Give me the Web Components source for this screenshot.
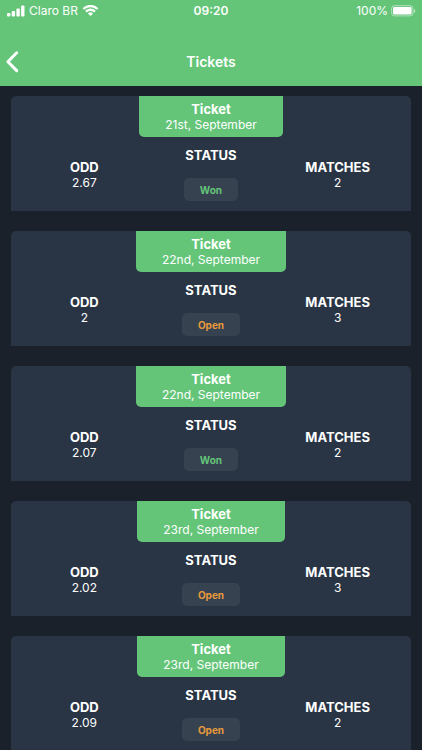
<!DOCTYPE html>
<html lang="en">
<head>
<meta charset="utf-8">
<meta name="viewport" content="width=device-width, initial-scale=1">
<title>Tickets</title>
<style>
  html { background: #1a212b; }
  body { margin: 0; height: 100vh; overflow: hidden; font-family: Inter, "Liberation Sans", sans-serif; font-size: 12px; line-height: 16px; color: #fff; }
</style>
</head>
<body>
<tickets-app></tickets-app>
<script>
function define(name, html, setup) {
  const template = document.createElement('template');
  template.innerHTML = html;
  customElements.define(name, class extends HTMLElement {
    connectedCallback() {
      if (this.shadowRoot) return;
      this.attachShadow({ mode: 'open' }).append(template.content.cloneNode(true));
      if (setup) setup(this, this.shadowRoot);
    }
  });
}

define('status-bar', `
<style>
  :host { display: grid; grid-template-columns: 1fr auto 1fr; align-items: center; height: 22px; padding: 0 6px; }
  .side { display: flex; align-items: center; gap: 4px; }
  .right { justify-content: flex-end; gap: 3px; }
  .time { font-weight: 600; }
  svg { display: block; }
</style>
<div class="side">
  <svg width="19" height="12" viewBox="0 0 19 12" fill="#fff" aria-hidden="true">
    <rect x="1" y="8" width="3.4" height="3.5" rx="1"/><rect x="5.7" y="6" width="3.4" height="5.5" rx="1"/><rect x="10.4" y="3.5" width="3.4" height="8" rx="1"/><rect x="15.1" y=".5" width="3.4" height="11" rx="1"/>
  </svg>
  <span>Claro BR</span>
  <svg width="17" height="12" viewBox="0.5 1 16 11" fill="#fff" aria-hidden="true">
    <path d="M8.5 2.9c2.2 0 4.2.9 5.7 2.3.1.1.3.1.4 0l1.1-1.1c.1-.1.1-.3 0-.5A10.5 10.5 0 0 0 1.3 3.6c-.1.2-.1.4 0 .5l1.1 1.1c.1.1.3.1.4 0A8.2 8.2 0 0 1 8.5 2.9z"/>
    <path d="M8.5 6.4c1.2 0 2.3.4 3.2 1.2.1.1.3.1.5 0l1.1-1.1c.1-.1.1-.3 0-.5a7 7 0 0 0-9.6 0c-.1.2-.1.4 0 .5l1.1 1.1c.2.1.4.1.5 0 .9-.8 2-1.2 3.2-1.2z"/>
    <path d="M10.7 9c.1-.1.1-.3 0-.4a3.5 3.5 0 0 0-4.4 0c-.1.1-.1.3 0 .4l1.9 1.9c.2.2.4.2.6 0z"/>
  </svg>
</div>
<span class="time">09:20</span>
<div class="side right">
  <span>100%</span>
  <svg width="25" height="12" viewBox="0 0 25 12" aria-hidden="true">
    <rect x=".6" y=".7" width="21.4" height="10.2" rx="2.8" fill="none" stroke="#fff" stroke-opacity=".5"/>
    <rect x="2" y="2.1" width="18.6" height="7.4" rx="1.4" fill="#fff"/>
    <path d="M23 4v4c.8-.4 1.3-1.1 1.3-2s-.5-1.6-1.3-2z" fill="#fff" fill-opacity=".5"/>
  </svg>
</div>`);

define('nav-bar', `
<style>
  :host { display: grid; grid-template-columns: 44px 1fr 44px; align-items: center; padding: 28px 0 13px; }
  button { justify-self: start; display: flex; border: 0; margin: 0; padding: 0 8px 0 5px; background: none; color: inherit; }
  h1 { margin: 0; padding-top: 1px; font-size: 14px; font-weight: 600; line-height: 22px; text-align: center; }
</style>
<button type="button" aria-label="Back">
  <svg width="15" height="23" viewBox="0 0 15 23" fill="none" stroke="#fff" stroke-width="3" stroke-linecap="round" stroke-linejoin="round" aria-hidden="true"><path d="M11.7 2.8 2.9 11.7 11.7 20.6"/></svg>
</button>
<h1><slot></slot></h1>`);

define('status-badge', `
<style>
  :host { display: block; padding: 4px 16px 3px; border-radius: 5px; background: #374250; color: #64c579; font-size: 10px; font-weight: 700; line-height: 16px; }
  :host([kind="open"]) { color: #e89a3c; }
</style>
<slot></slot>`);

define('ticket-stat', `
<style>
  :host { display: flex; flex-direction: column; align-items: center; text-align: center; }
  .label { font-size: 13px; font-weight: 700; text-transform: uppercase; }
</style>
<span class="label"><slot name="label"></slot></span>
<slot></slot>`);

define('ticket-card', `
<style>
  :host { display: flex; flex-direction: column; align-items: center; border-radius: 5px 5px 0 0; background: #293444; }
  header { padding: 5px 26px 4px; border-radius: 0 0 5px 5px; background: #64c579; text-align: center; }
  h2 { margin: 0; font-size: 13px; font-weight: 700; line-height: 16px; }
  p { margin: 0; }
  .stats { align-self: stretch; display: grid; grid-template-columns: repeat(3, 1fr); align-items: center; padding: 10px; }
  .side { padding-top: 2px; }
  .status { gap: 15px; }
</style>
<header><h2>Ticket</h2><p class="date"></p></header>
<div class="stats">
  <ticket-stat class="side"><span slot="label">Odd</span><span class="odd"></span></ticket-stat>
  <ticket-stat class="status"><span slot="label">Status</span><status-badge></status-badge></ticket-stat>
  <ticket-stat class="side"><span slot="label">Matches</span><span class="matches"></span></ticket-stat>
</div>`, (host, root) => {
  root.querySelector('.date').textContent = host.getAttribute('date');
  root.querySelector('.odd').textContent = host.getAttribute('odd');
  root.querySelector('.matches').textContent = host.getAttribute('matches');
  const badge = root.querySelector('status-badge');
  badge.textContent = host.getAttribute('status');
  badge.setAttribute('kind', host.getAttribute('status').toLowerCase());
});

define('tickets-app', `
<style>
  :host { display: flex; flex-direction: column; height: 100%; }
  .top { flex: none; background: #64c579; }
  main { flex: 1; min-height: 0; overflow: hidden; padding: 10px 11px 0; display: flex; flex-direction: column; gap: 20px; }
  ticket-card { flex: none; }
</style>
<div class="top"><status-bar></status-bar><nav-bar>Tickets</nav-bar></div>
<main>
  <ticket-card date="21st, September" odd="2.67" status="Won" matches="2"></ticket-card>
  <ticket-card date="22nd, September" odd="2" status="Open" matches="3"></ticket-card>
  <ticket-card date="22nd, September" odd="2.07" status="Won" matches="2"></ticket-card>
  <ticket-card date="23rd, September" odd="2.02" status="Open" matches="3"></ticket-card>
  <ticket-card date="23rd, September" odd="2.09" status="Open" matches="2"></ticket-card>
</main>`);
</script>
</body>
</html>
